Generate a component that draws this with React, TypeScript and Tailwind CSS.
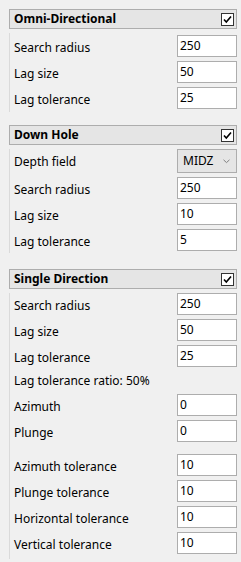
import React from "react";

const font = { fontFamily: '"Segoe UI", "Noto Sans", "Open Sans", sans-serif' };

function Check() {
  return (
    <div className="w-[13px] h-[13px] border border-[#333333] bg-white flex items-center justify-center">
      <svg width="11" height="11" viewBox="0 0 11 11">
        <path d="M2 5.5 L4.3 8 L9 2.5" fill="none" stroke="#000" strokeWidth="1.6" />
      </svg>
    </div>
  );
}

function Header({ title }: { title: string }) {
  return (
    <div className="h-[20px] border border-[#adadad] bg-[#e5e5e5] flex items-center justify-between pl-[4px] pr-[2px]">
      <span className="text-[12px] font-bold text-black leading-none">{title}</span>
      <Check />
    </div>
  );
}

function Row({ label, value, extra = "" }: { label: string; value: string; extra?: string }) {
  return (
    <div className={`h-[26px] flex items-start justify-between ${extra}`}>
      <span className="text-[12px] text-black leading-none pt-[7px]">{label}</span>
      <div className="w-[60px] h-[22px] border border-[#adadad] bg-white text-[12px] text-black leading-none pl-[2px] pt-[4px]">
        {value}
      </div>
    </div>
  );
}

function Content({ children, extra = "" }: { children: React.ReactNode; extra?: string }) {
  return (
    <div className={`border-l border-[#dadada] pl-[4px] ${extra}`}>{children}</div>
  );
}

export default function App() {
  return (
    <div className="w-[241px] h-[562px] bg-[#f0f0f0] pl-[9px] pr-[4px] pt-[9px]" style={font}>
      <Header title="Omni-Directional" />
      <Content extra="mt-[4px] pt-[2px] pb-[0px] h-[79px]">
        <Row label="Search radius" value="250" />
        <Row label="Lag size" value="50" />
        <Row label="Lag tolerance" value="25" />
      </Content>
      <div className="h-[13px]" />
      <Header title="Down Hole" />
      <Content extra="mt-[4px] h-[104px]">
        <div className="h-[28px] flex items-start justify-between">
          <span className="text-[12px] text-black leading-none pt-[7px]">Depth field</span>
          <div className="w-[60px] h-[24px] border border-[#adadad] bg-[#e5e5e5] flex items-center justify-between pl-[5px] pr-[6px]">
            <span className="text-[12px] text-black leading-none">MIDZ</span>
            <svg width="7" height="5" viewBox="0 0 7 5">
              <path d="M0.5 0.8 L3.5 3.6 L6.5 0.8" fill="none" stroke="#808080" strokeWidth="1" />
            </svg>
          </div>
        </div>
        <Row label="Search radius" value="250" />
        <Row label="Lag size" value="10" />
        <Row label="Lag tolerance" value="5" />
      </Content>
      <div className="h-[16px]" />
      <Header title="Single Direction" />
      <Content extra="mt-[4px] h-[266px]">
        <Row label="Search radius" value="250" />
        <Row label="Lag size" value="50" />
        <Row label="Lag tolerance" value="25" />
        <div className="h-[23px] text-[12px] text-black leading-none pt-[4px]">Lag tolerance ratio: 50%</div>
        <Row label="Azimuth" value="0" />
        <Row label="Plunge" value="0" />
        <div className="h-[8px]" />
        <Row label="Azimuth tolerance" value="10" />
        <Row label="Plunge tolerance" value="10" />
        <Row label="Horizontal tolerance" value="10" />
        <Row label="Vertical tolerance" value="10" />
      </Content>
    </div>
  );
}
